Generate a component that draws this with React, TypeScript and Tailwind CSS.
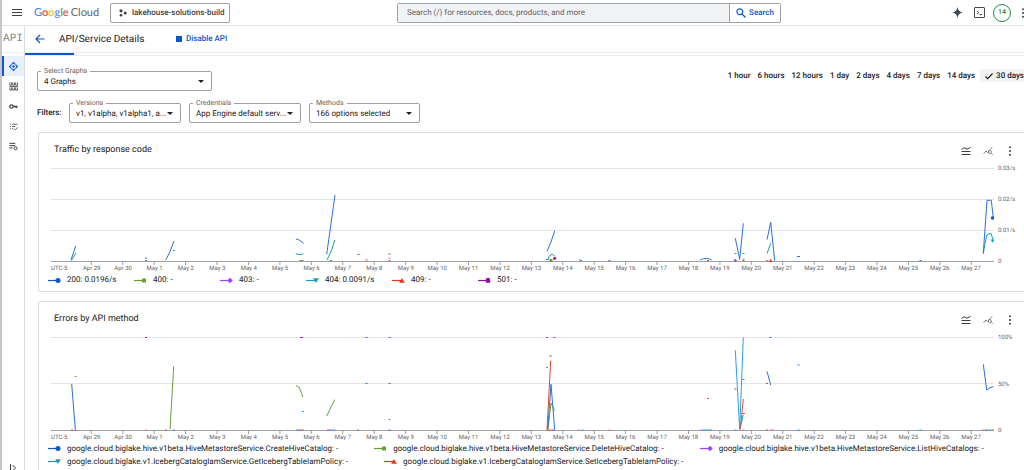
import type { ReactNode } from "react";

type Line = [color: string, points: string];
type Dash = [color: string, x: number, y: number, length?: number];

type ChartData = {
  title: string;
  scale: string[];
  lines: Line[];
  dashes: Dash[];
};

type LegendEntry = {
  color: string;
  shape: "circle" | "square" | "diamond" | "down" | "up" | "pad";
  label: string;
};

const BLUE = "#2b70e4";
const GREEN = "#689f38";
const PURPLE = "#a142f4";
const TEAL = "#12a4af";
const RED = "#f4432c";
const VIOLET = "#9c1fb0";
const SKY = "#2ba0e8";
const PINK = "#f06fb4";

const days = [
  "Apr 29",
  "Apr 30",
  ...Array.from({ length: 27 }, (_, i) => `May ${i + 1}`),
];

const ranges = ["1 hour", "6 hours", "12 hours", "1 day", "2 days", "4 days", "7 days", "14 days"];

const traffic: ChartData = {
  title: "Traffic by response code",
  scale: ["0.03/s", "0.02/s", "0.01/s", "0"],
  lines: [
    [TEAL, "20.3,92.5 25,85"],
    [BLUE, "20,92 24.7,78"],
    [BLUE, "114.7,92 119,83.7 123,73"],
    [BLUE, "245,71 247.7,71.7 252.7,75.3"],
    [TEAL, "244.7,85.7 247.5,86.5 250,86.5 252.3,85.7"],
    [BLUE, "275.7,86.3 284,27"],
    [TEAL, "276,92 280.7,82 283.7,72"],
    [BLUE, "496,83.3 500,74 503.7,62.7"],
    [TEAL, "497,92 498.3,88 501,86.3 503.7,88"],
    [BLUE, "528,91.7 531,92.7"],
    [BLUE, "649.3,92 652.3,90.7 655.7,90.3 660.7,91.7"],
    [BLUE, "684.3,70.3 688.7,91.3 692.3,55.3"],
    [BLUE, "716,71.7 719.7,54.3 723.7,92.7"],
    [TEAL, "716,85.7 719.7,75.3"],
    [TEAL, "932.3,85.7 934,75.3 936,66.7 940,65.3 942.3,72.7"],
    [BLUE, "932.3,85.3 936,32.3 940.3,32.3 942.3,50"],
  ],
  dashes: [
    [BLUE, 95, 90],
    [GREEN, 95, 92.5],
    [TEAL, 123, 82.5],
    [GREEN, 250.5, 92.5, 4],
    [GREEN, 280, 92.5],
    [BLUE, 307.5, 86.5],
    [RED, 315.5, 92],
    [BLUE, 338.5, 86],
    [PINK, 338.5, 90],
    [RED, 338.5, 92.5],
    [PURPLE, 496, 91.5],
    [BLUE, 558.5, 92.5],
    [RED, 657, 92.5],
    [TEAL, 684.5, 85.5],
    [TEAL, 692.5, 85.5],
    [GREEN, 692.5, 91],
    [RED, 692.5, 92.5],
    [RED, 716.5, 92.5],
    [BLUE, 747.5, 88.5, 3],
    [BLUE, 869.5, 92.5],
  ],
};

const errors: ChartData = {
  title: "Errors by API method",
  scale: ["100%", "50%", "0"],
  lines: [
    [BLUE, "20.7,47 24.3,92.3"],
    [GREEN, "119,92.3 122.7,29.3"],
    [GREEN, "245,48.3 248.3,50.7 252,60"],
    [GREEN, "275.7,79 283.7,62.7"],
    [GREEN, "497,92 500,66 503.7,73.7"],
    [RED, "496,92.7 499.7,23.7"],
    [BLUE, "496.7,92.7 500,47.3 503.7,92.7"],
    [TEAL, "689,91.3 692.3,78"],
    [RED, "689.3,92.3 692.3,62"],
    [SKY, "684.3,13.3 688.7,92.3 692.3,0.5"],
    [BLUE, "716,34.3 719.7,48"],
    [BLUE, "932.3,27.3 935.7,53 939,50.7 942.3,49.7"],
  ],
  dashes: [
    [RED, 21, 93],
    [PURPLE, 24.5, 93],
    [GREEN, 24.5, 39.5],
    [VIOLET, 95, 0.5],
    [PINK, 95, 93],
    [RED, 115, 93],
    [SKY, 123, 93],
    [VIOLET, 250.5, 0.5, 3],
    [SKY, 252, 74.5],
    [SKY, 246, 93],
    [PURPLE, 248, 93],
    [RED, 250, 93],
    [GREEN, 252, 93],
    [PURPLE, 278, 93, 4],
    [SKY, 282.5, 93, 4],
    [GREEN, 307, 93],
    [PURPLE, 315.5, 0.5],
    [PURPLE, 338.5, 0.5],
    [BLUE, 315.5, 46.5],
    [BLUE, 338.5, 46.5],
    [GREEN, 338.5, 82.5],
    [PURPLE, 338.5, 93],
    [PURPLE, 496, 0.5],
    [PURPLE, 503.5, 0.5],
    [VIOLET, 499.5, 19],
    [SKY, 496, 30.5],
    [RED, 498, 93, 4],
    [PURPLE, 502, 93, 3],
    [PINK, 527.5, 93],
    [SKY, 531.5, 93],
    [PINK, 558.5, 93],
    [RED, 657, 61.5],
    [PINK, 649.5, 93],
    [SKY, 656, 93, 10],
    [BLUE, 684.5, 52],
    [SKY, 684.5, 93],
    [BLUE, 692.5, 42.5],
    [RED, 692.5, 76.5, 3],
    [PINK, 692.5, 93],
    [BLUE, 719.5, 0.5],
    [RED, 716, 46.5],
    [GREEN, 716, 93],
    [PINK, 721, 93, 4],
    [BLUE, 747.5, 28],
    [SKY, 747.5, 93],
    [SKY, 869.5, 93],
    [GREEN, 932.5, 93],
    [PURPLE, 935.5, 93, 3],
    [SKY, 939, 93, 3],
    [GREEN, 942, 93],
  ],
};

const trafficLegend: LegendEntry[] = [
  { color: "#0b57d0", shape: "circle", label: "200: 0.0196/s" },
  { color: "#689f38", shape: "square", label: "400: -" },
  { color: "#a142f4", shape: "diamond", label: "403: -" },
  { color: "#129eaf", shape: "down", label: "404: 0.0091/s" },
  { color: "#f4321f", shape: "up", label: "409: -" },
  { color: "#8e10a5", shape: "pad", label: "501: -" },
];

const errorsLegend: LegendEntry[] = [
  {
    color: "#0b57d0",
    shape: "circle",
    label: "google.cloud.biglake.hive.v1beta.HiveMetastoreService.CreateHiveCatalog: -",
  },
  {
    color: "#689f38",
    shape: "square",
    label: "google.cloud.biglake.hive.v1beta.HiveMetastoreService.DeleteHiveCatalog: -",
  },
  {
    color: "#a142f4",
    shape: "diamond",
    label: "google.cloud.biglake.hive.v1beta.HiveMetastoreService.ListHiveCatalogs: -",
  },
  {
    color: "#129eaf",
    shape: "down",
    label: "google.cloud.biglake.v1.IcebergCatalogIamService.GetIcebergTableIamPolicy: -",
  },
  {
    color: "#f4321f",
    shape: "up",
    label: "google.cloud.biglake.v1.IcebergCatalogIamService.SetIcebergTableIamPolicy: -",
  },
];

function Kebab() {
  return (
    <svg viewBox="0 0 10 10" className="size-[10px]" fill="#3c4043">
      <circle cx="5" cy="1.3" r="1" />
      <circle cx="5" cy="5" r="1" />
      <circle cx="5" cy="8.7" r="1" />
    </svg>
  );
}

function Marker({ color, shape }: { color: string; shape: LegendEntry["shape"] }) {
  return (
    <svg viewBox="0 0 13 7" className="h-[7px] w-[13px] shrink-0" fill={color}>
      <path d="M0 3.5h10" stroke={color} strokeWidth="1.2" />
      {shape === "circle" && <circle cx="10" cy="3.5" r="2.5" />}
      {shape === "square" && <rect x="8" y="1.5" width="4" height="4" />}
      {shape === "diamond" && <path d="M10 .7 12.7 3.5 10 6.3 7.3 3.5z" />}
      {shape === "down" && <path d="M7.2 1.2h5.6L10 6z" />}
      {shape === "up" && <path d="M7.2 5.8h5.6L10 1z" />}
      {shape === "pad" && <path d="M7.8 5.7V3a2.2 2.2 0 0 1 4.4 0v2.7z" />}
    </svg>
  );
}

function SelectField({ id, label, value, className }: { id: string; label: string; value: string; className: string }) {
  return (
    <div className={`relative ${className}`}>
      <label
        htmlFor={id}
        className="absolute -top-1 left-1 bg-white px-[3px] text-[7px] leading-[8px] text-[#5f6368]"
      >
        {label}
      </label>
      <select
        id={id}
        className="block h-5 w-full appearance-none rounded-[2px] border border-[#9aa0a6] bg-white pt-px pr-2 pl-[6px] text-[8px] text-[#202124]"
      >
        <option>{value}</option>
      </select>
      <svg viewBox="0 0 6 3" className="pointer-events-none absolute top-[9px] right-2 h-[3px] w-[6px]">
        <path d="M0 0h6L3 3z" fill="#202124" />
      </svg>
    </div>
  );
}

function Plot({ data, children }: { data: ChartData; children?: ReactNode }) {
  const step = 93 / (data.scale.length - 1);

  return (
    <div className="flex">
      <div className="ml-3 min-w-0 flex-1">
        <svg viewBox="0 0 943 97" preserveAspectRatio="none" className="block h-[97px] w-full" fill="none">
          {data.scale.map((value, i) => (
            <path
              key={value}
              d={`M0 ${Math.floor(i * step) + 0.5}H943`}
              stroke={value === "0" ? "#9aa0a6" : "#e3e4e6"}
            />
          ))}
          {days.map((day, i) => (
            <path key={day} d={`M${40.3 + i * 31.43} 94v3`} stroke="#9aa0a6" />
          ))}
          {data.lines.map(([color, points]) => (
            <polyline key={color + points} points={points} stroke={color} strokeWidth="1" />
          ))}
          {data.dashes.map(([color, x, y, length = 2], i) => (
            <path key={i} d={`M${x - length / 2} ${y}h${length}`} stroke={color} strokeWidth="1" />
          ))}
          {children}
        </svg>
        <div className="flex pr-[7px] text-[6px] leading-[7px] whitespace-nowrap text-[#5f6368]">
          <span className="w-[25px] shrink-0">UTC-5</span>
          {days.map((day) => (
            <span key={day} className="flex w-0 flex-1 justify-center">
              {day}
            </span>
          ))}
        </div>
      </div>
      <div className="-mt-[3px] flex h-[100px] w-[30px] shrink-0 flex-col justify-between pl-1 text-[6px] leading-[7px] text-[#5f6368]">
        {data.scale.map((value) => (
          <span key={value}>{value}</span>
        ))}
      </div>
    </div>
  );
}

function ChartCard({ title, children }: { title: string; children: ReactNode }) {
  return (
    <section className="rounded-l-[3px] border-y border-l border-[#dadce0] bg-white pb-[6px]">
      <div className="flex h-[35px] items-center justify-between pr-[9px] pl-[15px]">
        <h2 className="pt-px text-[9px] text-[#202124]">{title}</h2>
        <div className="flex items-center gap-3">
          <button aria-label="Toggle legend">
            <svg viewBox="0 0 10 10" className="size-[10px]" fill="none" stroke="#3c4043" strokeWidth="1">
              <path d="M.5 3.5 3 1.700l3 1.500L9.500 1.300M.5 5.500h9M.5 8.500h9" />
            </svg>
          </button>
          <button aria-label="Explore data">
            <svg viewBox="0 0 10 10" className="size-[10px]" fill="none" stroke="#5f6368" strokeWidth=".8">
              <path d="M.5 8 3 5l1.500 1.500L9.300 1.200" />
              <circle cx="6.8" cy="6" r="1.5" />
              <path d="m8 7.200 1.700 1.700" />
            </svg>
          </button>
          <button aria-label="More options">
            <Kebab />
          </button>
        </div>
      </div>
      {children}
    </section>
  );
}

function LegendItem({ entry }: { entry: LegendEntry }) {
  return (
    <>
      <Marker color={entry.color} shape={entry.shape} />
      <span className="whitespace-nowrap">{entry.label}</span>
    </>
  );
}

function SideLink({ label, active, children }: { label: string; active?: boolean; children: ReactNode }) {
  return (
    <a
      href="#"
      aria-label={label}
      className={`flex h-5 items-center justify-center border-l-2 pr-[2px] ${
        active ? "border-[#0b57d0] bg-[#e8f0fe]" : "border-transparent"
      }`}
    >
      <svg viewBox="0 0 10 10" className="size-[9px]" fill="none" stroke={active ? "#0b57d0" : "#3c4043"} strokeWidth="1">
        {children}
      </svg>
    </a>
  );
}

function Header() {
  return (
    <header className="flex h-[26px] shrink-0 items-center border-b border-[#e0e2e5]">
      <button aria-label="Main menu" className="ml-[10px]">
        <svg viewBox="0 0 10 8" className="h-2 w-[10px]" stroke="#3c4043" strokeWidth="1">
          <path d="M0 .5h10M0 3.5h10M0 6.5h10" />
        </svg>
      </button>
      <a href="#" className="ml-3 flex w-[76px] gap-[2px] font-['Lato',sans-serif] text-[11px] leading-[14px]">
        <span className="font-medium">
          <span className="text-[#4285f4]">G</span>
          <span className="text-[#ea4335]">o</span>
          <span className="text-[#fbbc04]">o</span>
          <span className="text-[#4285f4]">g</span>
          <span className="text-[#34a853]">l</span>
          <span className="text-[#ea4335]">e</span>
        </span>
        <span className="text-[#5f6368]">Cloud</span>
      </a>
      <button className="flex h-5 w-[120px] shrink-0 items-center gap-[5px] rounded-[2px] border border-[#9aa0a6] pl-2 text-[8px] font-medium whitespace-nowrap text-[#3c4043]">
        <svg viewBox="0 0 8 8" className="size-2" fill="#3c4043">
          <circle cx="2" cy="1.8" r="1.6" />
          <circle cx="6.2" cy="4" r="1.5" />
          <circle cx="2" cy="6.3" r="1.3" />
        </svg>
        lakehouse-solutions-build
      </button>
      <form className="mx-auto flex h-5 w-[384px] rounded-[2px] border border-[#9aa0a6]">
        <input
          type="search"
          aria-label="Search"
          placeholder="Search (/) for resources, docs, products, and more"
          className="min-w-0 flex-1 bg-[#f1f3f4] px-[9px] text-[8px] placeholder:text-[#5f6368]"
        />
        <button
          type="button"
          className="flex w-[51px] items-center justify-center gap-[3px] border-l border-[#9aa0a6] text-[8px] font-medium text-[#0b57d0]"
        >
          <svg viewBox="0 0 10 10" className="size-[10px]" fill="none" stroke="#0b57d0" strokeWidth="1.2">
            <circle cx="3.8" cy="3.8" r="2.9" />
            <path d="m6 6 3.5 3.5" />
          </svg>
          Search
        </button>
      </form>
      <div className="flex shrink-0 items-center pl-1">
        <button aria-label="Gemini" className="mr-[11px]">
          <svg viewBox="0 0 12 12" className="size-[11px]" fill="#444a52">
            <path d="M6 0c.5 3.600 2.400 5.500 6 6-3.600.5-5.500 2.400-6 6-.5-3.600-2.400-5.500-6-6 3.600-.5 5.500-2.400 6-6z" />
          </svg>
        </button>
        <button aria-label="Cloud Shell" className="mr-2">
          <svg viewBox="0 0 11 11" className="size-[11px]" fill="none" stroke="#444a52" strokeWidth="1">
            <rect x=".5" y=".5" width="10" height="10" rx=".5" />
            <path d="m3 4 1.800 1.500L3 7M5.500 7.500h2.500" />
          </svg>
        </button>
        <button className="flex size-[18px] items-center justify-center rounded-full border border-[#1e8e3e] text-[7px] font-medium text-[#1e8e3e]">
          14
        </button>
        <button aria-label="More" className="ml-[7px] w-[6px] overflow-hidden">
          <Kebab />
        </button>
      </div>
    </header>
  );
}

function Sidebar() {
  return (
    <nav className="flex w-[23px] shrink-0 flex-col overflow-hidden border-r border-[#dadce0]">
      <div className="mb-[3px] flex h-[27px] shrink-0 items-center justify-center border-b border-[#e8eaed] font-['Liberation_Mono',monospace] text-[11px] text-[#80868b]">
        API
      </div>
      <SideLink label="Enabled APIs and services" active>
        <path d="m3 2.700 2-2 2 2M3 7.300l2 2 2-2M2.700 3l-2 2 2 2M7.300 3l2 2-2 2" strokeWidth="1.300" />
        <circle cx="5" cy="5" r="1.300" fill="#0b57d0" stroke="none" />
      </SideLink>
      <SideLink label="Library">
        <path d="M1 .5v3h2v-3M4.200 .5v3h2v-3M7.400 .5v3h2v-3M.5 5h9.500M1 6v3h2V6M4.200 6v3h2V6M7.400 6v3h2V6" strokeWidth=".9" />
      </SideLink>
      <SideLink label="Credentials">
        <circle cx="2.800" cy="5" r="1.900" strokeWidth="1.300" />
        <path d="M4.700 5h4.800M8 5v2" strokeWidth="1.400" />
      </SideLink>
      <SideLink label="OAuth consent screen">
        <path d="M1 2.500h1.200M3.500 2.500h6M1 5h1.200M3.500 5H7M1 7.500h1.200M3.500 7.500H5M6 7.500l1.200 1.200L9.500 6" strokeWidth=".9" />
      </SideLink>
      <SideLink label="Page usage agreements">
        <path d="M.5 1.500H7M.5 4H7M.5 6.500H4" strokeWidth="1.100" />
        <circle cx="7.300" cy="7" r="1.700" strokeWidth="1.100" />
      </SideLink>
      <button aria-label="Expand menu" className="mt-auto -mb-1 flex h-[11px] shrink-0 justify-center">
        <svg viewBox="0 0 8 10" className="h-[10px] w-2" fill="none" stroke="#3c4043" strokeWidth="1">
          <path d="M1.500 1v8M3.500 2l3 3-3 3" />
        </svg>
      </button>
    </nav>
  );
}

export default function App() {
  return (
    <div className="flex h-screen flex-col overflow-hidden border-l-2 border-[#c6c6c6] bg-white font-['Roboto',sans-serif] text-[#202124] **:[text-rendering:geometricPrecision]">
      <Header />
      <div className="flex min-h-0 flex-1">
        <Sidebar />
        <main className="min-w-0 flex-1">
          <div className="flex h-[27px] items-center border-b border-[#e8eaed]">
            <button aria-label="Back" className="ml-[10px]">
              <svg viewBox="0 0 10 10" className="size-[10px]" fill="none" stroke="#0b57d0" strokeWidth="1.200">
                <path d="M9.500 5H1.200M5 1 1 5l4 4" />
              </svg>
            </button>
            <h1 className="ml-[14px] w-[117px] text-[10px] whitespace-nowrap">API/Service Details</h1>
            <button className="flex items-center gap-1 text-[8px] font-medium text-[#0b57d0]">
              <span className="size-[6px] bg-[#0b57d0]" />
              Disable API
            </button>
          </div>
          <div className="flex h-[3px] items-start border-b border-[#eceef0]">
            <span className="h-[2px] w-[49px] bg-[#0b57d0]" />
          </div>

          <div className="pl-3">
            <div className="flex items-start justify-between pt-[13px]">
              <SelectField id="graphs" label="Select Graphs" value="4 Graphs" className="mt-[2px] w-[175px]" />
              <div className="flex h-[13px] items-center gap-[7px] text-[8px] font-medium whitespace-nowrap">
                {ranges.map((range) => (
                  <button key={range}>{range}</button>
                ))}
                <button className="-ml-[2px] flex h-[13px] items-center gap-[3px] rounded-l-[2px] bg-[#f1f3f4] pl-[5px]">
                  <svg viewBox="0 0 8 8" className="size-2" fill="none" stroke="#202124" strokeWidth="1.200">
                    <path d="m.5 4.500 2.200 2.200L7.500 1.500" />
                  </svg>
                  30 days
                </button>
              </div>
            </div>

            <div className="mt-3 flex items-center gap-2">
              <span className="w-6 text-[8px] font-medium">Filters:</span>
              <SelectField id="versions" label="Versions" value="v1, v1alpha, v1alpha1, a..." className="w-[112px]" />
              <SelectField id="credentials" label="Credentials" value="App Engine default serv..." className="w-[112px]" />
              <SelectField id="methods" label="Methods" value="166 options selected" className="w-[111px]" />
            </div>

            <div className="mt-[9px] ml-px flex flex-col gap-[9px]">
              <ChartCard title={traffic.title}>
                <Plot data={traffic}>
                  <rect x="498.500" y="91" width="3" height="3" fill={GREEN} />
                  <circle cx="503.700" cy="90.300" r="1.600" fill={VIOLET} />
                  <path d="M684.300 90.800 686 92.500l-1.700 1.700-1.700-1.700z" fill={PURPLE} />
                  <path d="M718 94h3.400l-1.700-3.200z" fill="#f4321f" />
                  <circle cx="941.500" cy="50" r="1.700" fill="#0b57d0" />
                  <path d="M939.500 71.500h4l-2 3.200z" fill={TEAL} />
                </Plot>
                <div className="mt-[3px] flex pl-[9px] text-[8px] leading-[10px]">
                  {trafficLegend.map((entry) => (
                    <div key={entry.label} className="flex w-[86px] items-center gap-[6px]">
                      <LegendItem entry={entry} />
                    </div>
                  ))}
                </div>
              </ChartCard>

              <ChartCard title={errors.title}>
                <Plot data={errors} />
                <div className="mt-px flex flex-wrap gap-x-9 pl-[9px] text-[8px] leading-[13px]">
                  {errorsLegend.map((entry) => (
                    <div key={entry.label} className="flex items-center gap-[6px]">
                      <LegendItem entry={entry} />
                    </div>
                  ))}
                </div>
              </ChartCard>
            </div>
          </div>
        </main>
      </div>
    </div>
  );
}
